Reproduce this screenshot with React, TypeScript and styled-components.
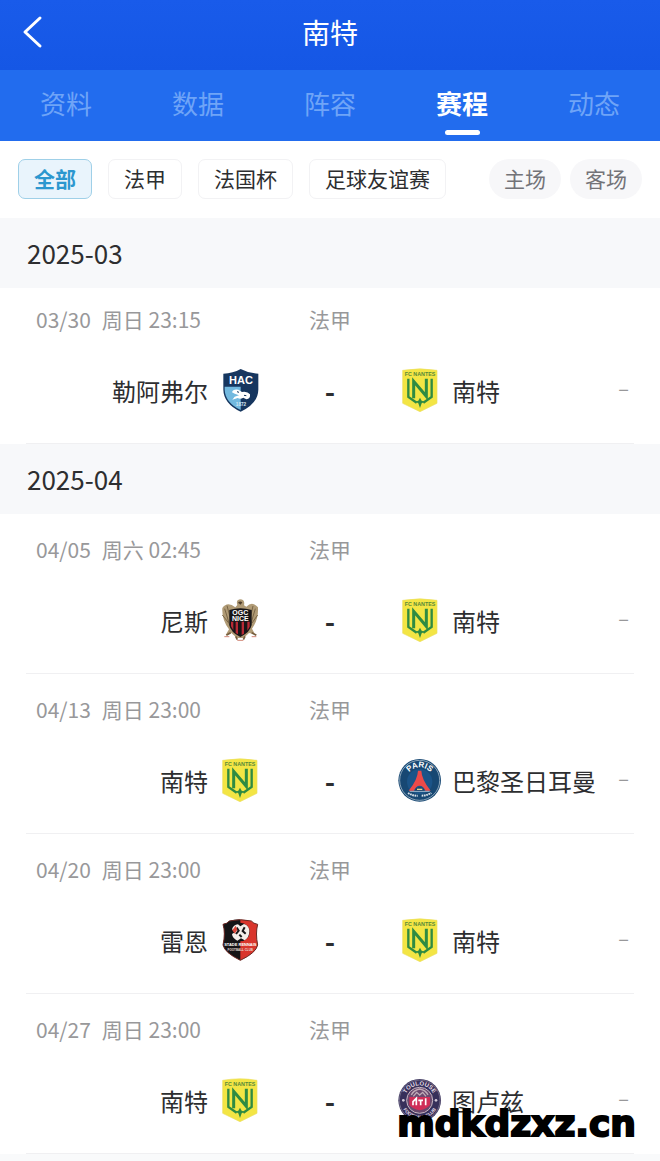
import React, { useState } from "react";
import styled, { createGlobalStyle } from "styled-components";

const GlobalStyle = createGlobalStyle`
  * { box-sizing: border-box; }
  body {
    margin: 0;
    background: #f9fafb;
    color: #2d2e30;
    font-family: "Noto Sans CJK SC", sans-serif;
  }
  button { font-family: inherit; cursor: pointer; }
  h1, h2, ul, p { margin: 0; padding: 0; font-weight: 400; }
`;

const Page = styled.div`
  position: relative;
  padding-bottom: 7px;
`;

const Header = styled.header`
  display: grid;
  grid-template-columns: 64px 1fr 64px;
  align-items: center;
  height: 70px;
  padding-bottom: 6px;
  background: linear-gradient(#195bea, #1557e5);
  color: #fff;
`;

const BackButton = styled.button`
  display: flex;
  padding: 0 0 0 22px;
  border: 0;
  background: none;
  color: inherit;
`;

const Title = styled.h1`
  font-size: 28px;
  line-height: 40px;
  text-align: center;
`;

const Tabs = styled.nav`
  display: flex;
  height: 71px;
  background: #226cee;
`;

const Tab = styled.a<{ $active: boolean }>`
  position: relative;
  flex: 1;
  font-size: 26px;
  line-height: 65px;
  text-align: center;
  text-decoration: none;
  color: ${(p) => (p.$active ? "#fff" : "#6fa4f7")};
  font-weight: ${(p) => (p.$active ? 700 : 400)};

  &::after {
    content: "";
    display: ${(p) => (p.$active ? "block" : "none")};
    position: absolute;
    left: calc(50% - 17px);
    bottom: 6px;
    width: 35px;
    height: 5px;
    border-radius: 3px;
    background: #fff;
  }
`;

const Filters = styled.div`
  display: flex;
  justify-content: space-between;
  padding: 18px;
  height: 77px;
  background: #fff;
`;

const FilterGroup = styled.div<{ $gap: number }>`
  display: flex;
  gap: ${(p) => p.$gap}px;
`;

const Chip = styled.button<{ $active: boolean }>`
  height: 40px;
  padding: 0 15px 2px;
  border: 1px solid ${(p) => (p.$active ? "#9fd0e8" : "#f2f2f4")};
  border-radius: 7px;
  background: ${(p) => (p.$active ? "#e9f4fc" : "#fff")};
  color: ${(p) => (p.$active ? "#2c97cf" : "#2d2e30")};
  font-size: 21px;
  line-height: 36px;
  font-weight: ${(p) => (p.$active ? 700 : 400)};
  white-space: nowrap;
`;

const VenueButton = styled.button`
  height: 40px;
  padding: 0 15px 2px;
  border: 0;
  border-radius: 20px;
  background: #f7f7f9;
  color: #737378;
  font-size: 21px;
  line-height: 38px;
  white-space: nowrap;
`;

const MonthTitle = styled.h2`
  padding: 0 27px;
  background: #f7f8fa;
  font-size: 26px;
  line-height: 70px;
`;

const MatchList = styled.ul`
  list-style: none;
  background: #fff;
`;

const Match = styled.li<{ $tight: boolean }>`
  margin: 0 26px;
  padding: ${(p) => (p.$tight ? 16 : 20)}px 0 32px;
  border-bottom: 1px solid #f0f0f2;
`;

const Columns = styled.div`
  display: grid;
  grid-template-columns: 1fr 138px 1fr;
  align-items: center;
`;

const Meta = styled(Columns)`
  margin-bottom: 35px;
  color: #98989a;
  font-size: 21px;
  line-height: 30px;
  white-space: nowrap;
`;

const Kickoff = styled.time`
  display: flex;
  gap: 11px;
  padding-left: 10px;
`;

const League = styled.span`
  text-align: center;
`;

const Side = styled.div<{ $home?: boolean }>`
  display: flex;
  align-items: center;
  justify-content: ${(p) => (p.$home ? "flex-end" : "flex-start")};
  gap: 11px;
  height: 42px;
`;

const TeamName = styled.span`
  padding-top: 2px;
  font-size: 24px;
  line-height: 40px;
  white-space: nowrap;
`;

const Score = styled.span`
  padding-top: 2px;
  font-size: 28px;
  line-height: 40px;
  font-weight: 700;
  text-align: center;
`;

const Outcome = styled.span`
  margin-left: auto;
  padding: 0 5px 4px 0;
  color: #98989a;
  font-size: 20px;
  line-height: 38px;
`;

const CrestSvg = styled.svg`
  flex: none;
  width: 42px;
  height: 42px;
  overflow: visible;
  font-family: "Liberation Sans", sans-serif;
  font-weight: 700;
`;

const Watermark = styled.p`
  position: absolute;
  right: 24px;
  bottom: 15px;
  color: #000;
  font-family: "DejaVu Sans", sans-serif;
  font-size: 36px;
  font-weight: 700;
  line-height: 44px;
  -webkit-text-stroke: 2px #000;
`;

type Team = "havre" | "nantes" | "nice" | "paris" | "rennes" | "toulouse";

const teamNames: Record<Team, string> = {
  havre: "勒阿弗尔",
  nantes: "南特",
  nice: "尼斯",
  paris: "巴黎圣日耳曼",
  rennes: "雷恩",
  toulouse: "图卢兹",
};

const crests: Record<Team, React.ReactNode> = {
  havre: (
    <>
      <path d="M13 14Q42 13 65 0Q89 13 118 14V62Q117 104 65 128Q14 104 13 62Z" fill="#16365f" />
      <path d="M17 53H65V123Q19 101 17 62Z" fill="#72b9df" />
      <text x="66" y="46" fontSize="33" textAnchor="middle" fill="#fff">HAC</text>
      <path d="M39 70Q42 59 58 62L69 69Q85 66 93 76Q95 89 82 91L73 86Q64 92 56 87L40 92L47 83L60 79Q45 75 39 70Z" fill="#fff" />
      <path d="M54 68l6 2M75 79l7 1" stroke="#16365f" strokeWidth="3" />
      <text x="66" y="111" fontSize="14" textAnchor="middle" fill="#d5e8f3">1872</text>
    </>
  ),
  nantes: (
    <>
      <path d="M11 4Q63-5 114 4V103L63 128L11 103Z" fill="#f3e544" stroke="#ebdf62" strokeWidth="2" />
      <text x="63" y="20" fontSize="16" textAnchor="middle" fill="#55893a">FC NANTES</text>
      <g fill="none" stroke="#2f8b42" strokeWidth="7">
        <path d="M28 29V84L53 101M98 29V84L73 101" />
        <path d="M44 88V37L82 82V29" strokeWidth="9" />
      </g>
      <path d="M63 86l5 9 9 3-9 5-5 14-5-14-9-5 9-3z" fill="#2f8b42" />
    </>
  ),
  nice: (
    <>
      <path d="M55 18Q50 3 63 1Q79 1 75 19L82 23Q100 5 117 25Q119 62 99 89L108 106L90 102L74 117H54L37 102L20 108L30 91Q8 62 10 27Q25 6 49 25Z" fill="#b09b76" />
      <path d="M17 29L35 88M24 20L39 77M109 29L92 86M102 21L90 72M10 48L30 73M116 48L99 72" stroke="#796546" strokeWidth="3" />
      <path d="M57 11Q63 4 70 10L65 17Z" fill="#4f3f2c" />
      <path d="M31 33Q64 23 98 33V78Q93 100 64 114Q35 100 31 78Z" fill="#171517" />
      <path d="M36 68H43V94L36 82ZM50 68H57V106L50 102ZM68 68H75V104L68 108ZM85 68H92V83L85 95Z" fill="#b72935" />
      <text x="64" y="48" fontSize="21" textAnchor="middle" fill="#fff">OGC</text>
      <text x="64" y="66" fontSize="21" textAnchor="middle" fill="#fff">NICE</text>
      <path d="M22 109l13-8M98 101l14 8M50 112l5 10M78 112l-5 10" stroke="#765e3e" strokeWidth="5" />
      <path d="M16 113h15M98 113h14M55 124h18" stroke="#d18777" strokeWidth="3" />
    </>
  ),
  paris: (
    <>
      <circle cx="62" cy="64" r="64" fill="#174873" />
      <circle cx="62" cy="64" r="60" fill="none" stroke="#c2d0da" strokeWidth="2" />
      <circle cx="62" cy="68" r="38" fill="#1b5488" />
      <path id="paris-arc" d="M21 66A41 41 0 0 1 103 66" fill="none" />
      <text fontSize="24" fill="#fff"><textPath href="#paris-arc" startOffset="50%" textAnchor="middle">PARIS</textPath></text>
      <path d="M57 35H67Q68 62 95 95H79Q73 80 62 80Q51 80 45 95H29Q56 62 57 35Z" fill="#ec4a49" />
      <path d="M47 96Q52 85 62 85Q72 85 77 96Z" fill="#173e64" />
      <path d="M54 91h16" stroke="#ecd58f" strokeWidth="4" />
      <path d="M32 97H92" stroke="#e9eef2" strokeWidth="2" />
      <path d="M27 102Q42 111 56 110M68 110Q83 110 97 102" fill="none" stroke="#dae3eb" strokeWidth="6" strokeDasharray="5 2" />
    </>
  ),
  rennes: (
    <>
      <path d="M12 16Q25 14 31 6Q64-2 97 6Q103 14 116 16Q109 43 116 78Q112 101 64 124Q17 101 12 78Q20 42 12 16Z" fill="#d9352c" />
      <path d="M12 16Q25 14 31 6Q48 1 64 2V124Q17 101 12 78Q20 42 12 16Z" fill="#151416" />
      <path d="M12 16Q25 14 31 6Q64-2 97 6Q103 14 116 16Q109 43 116 78Q112 101 64 124Q17 101 12 78Q20 42 12 16Z" fill="none" stroke="#692a25" strokeWidth="3" />
      <circle cx="64" cy="39" r="28" fill="#151416" />
      <path d="M39 31Q43 18 57 16L64 22L75 15Q91 20 91 37Q91 55 77 64L66 58L55 65Q40 57 39 45L48 40Z" fill="#f5eeea" />
      <path d="M53 26l6 9-8 10M77 25l-6 11 9 8M61 47l7 7" fill="none" stroke="#191719" strokeWidth="6" />
      <path d="M40 34l10-14 5 12-8 12z" fill="#db4438" />
      <text x="64" y="82" fontSize="12" textAnchor="middle" fill="#fff">STADE RENNAIS</text>
      <text x="64" y="95" fontSize="9" textAnchor="middle" fill="#e7d9d5">FOOTBALL CLUB</text>
    </>
  ),
  toulouse: (
    <>
      <circle cx="62" cy="64" r="64" fill="#37305a" />
      <circle cx="62" cy="64" r="61" fill="none" stroke="#8b839b" strokeWidth="2" />
      <circle cx="62" cy="64" r="39" fill="#6a496e" stroke="#c6b8c4" strokeWidth="3" />
      <path id="toulouse-top" d="M17 64A45 45 0 0 1 107 64" fill="none" />
      <path id="toulouse-bottom" d="M7 77A57 57 0 0 0 117 77" fill="none" />
      <text fontSize="18" fill="#e5dfe8"><textPath href="#toulouse-top" startOffset="50%" textAnchor="middle">TOULOUSE</textPath></text>
      <text fontSize="14" fill="#e5dfe8"><textPath href="#toulouse-bottom" startOffset="50%" textAnchor="middle">FOOTBALL CLUB</textPath></text>
      <path d="M31 54H93V78Q84 90 62 94Q40 90 31 78Z" fill="#d02e58" />
      <path d="M37 48Q43 34 62 30Q81 34 87 48M43 52l10-12 9 8 9-8 10 12" fill="none" stroke="#c0adb8" strokeWidth="4" />
      <path d="M42 79V68L52 58V79M58 64H72M65 64V79M80 58V79" fill="none" stroke="#fff" strokeWidth="5" />
      <circle cx="13" cy="64" r="4" fill="#d2c9d8" />
      <circle cx="111" cy="64" r="4" fill="#d2c9d8" />
    </>
  ),
};

interface Fixture {
  date: string;
  day: string;
  time: string;
  home: Team;
  away: Team;
}

const months: { label: string; fixtures: Fixture[] }[] = [
  {
    label: "2025-03",
    fixtures: [{ date: "03/30", day: "周日", time: "23:15", home: "havre", away: "nantes" }],
  },
  {
    label: "2025-04",
    fixtures: [
      { date: "04/05", day: "周六", time: "02:45", home: "nice", away: "nantes" },
      { date: "04/13", day: "周日", time: "23:00", home: "nantes", away: "paris" },
      { date: "04/20", day: "周日", time: "23:00", home: "rennes", away: "nantes" },
      { date: "04/27", day: "周日", time: "23:00", home: "nantes", away: "toulouse" },
    ],
  },
];

const tabs = ["资料", "数据", "阵容", "赛程", "动态"];
const competitions = ["全部", "法甲", "法国杯", "足球友谊赛"];

function Crest({ team }: { team: Team }) {
  return (
    <CrestSvg viewBox="0 0 126 126" aria-hidden="true">
      {crests[team]}
    </CrestSvg>
  );
}

function MatchRow({ fixture, tight }: { fixture: Fixture; tight: boolean }) {
  return (
    <Match $tight={tight}>
      <Meta>
        <Kickoff>
          <span>{fixture.date}</span>
          <span>{`${fixture.day} ${fixture.time}`}</span>
        </Kickoff>
        <League>法甲</League>
      </Meta>
      <Columns>
        <Side $home>
          <TeamName>{teamNames[fixture.home]}</TeamName>
          <Crest team={fixture.home} />
        </Side>
        <Score>-</Score>
        <Side>
          <Crest team={fixture.away} />
          <TeamName>{teamNames[fixture.away]}</TeamName>
          <Outcome>–</Outcome>
        </Side>
      </Columns>
    </Match>
  );
}

export default function App() {
  const [tab, setTab] = useState("赛程");
  const [competition, setCompetition] = useState("全部");

  return (
    <>
      <GlobalStyle />
      <Page>
        <Header>
          <BackButton aria-label="返回">
            <svg width="21" height="34" viewBox="0 0 21 34" fill="none" stroke="currentColor" strokeWidth="3" strokeLinecap="round" strokeLinejoin="round">
              <path d="M18 3L3 17L18 31" />
            </svg>
          </BackButton>
          <Title>南特</Title>
        </Header>
        <Tabs>
          {tabs.map((name) => (
            <Tab key={name} href="#" $active={name === tab} onClick={() => setTab(name)}>
              {name}
            </Tab>
          ))}
        </Tabs>
        <Filters>
          <FilterGroup $gap={16}>
            {competitions.map((name) => (
              <Chip key={name} $active={name === competition} onClick={() => setCompetition(name)}>
                {name}
              </Chip>
            ))}
          </FilterGroup>
          <FilterGroup $gap={9}>
            <VenueButton>主场</VenueButton>
            <VenueButton>客场</VenueButton>
          </FilterGroup>
        </Filters>
        {months.map((month, index) => (
          <section key={month.label}>
            <MonthTitle>{month.label}</MonthTitle>
            <MatchList>
              {month.fixtures.map((fixture) => (
                <MatchRow key={fixture.date} fixture={fixture} tight={index === 0} />
              ))}
            </MatchList>
          </section>
        ))}
        <Watermark>mdkdzxz.cn</Watermark>
      </Page>
    </>
  );
}
